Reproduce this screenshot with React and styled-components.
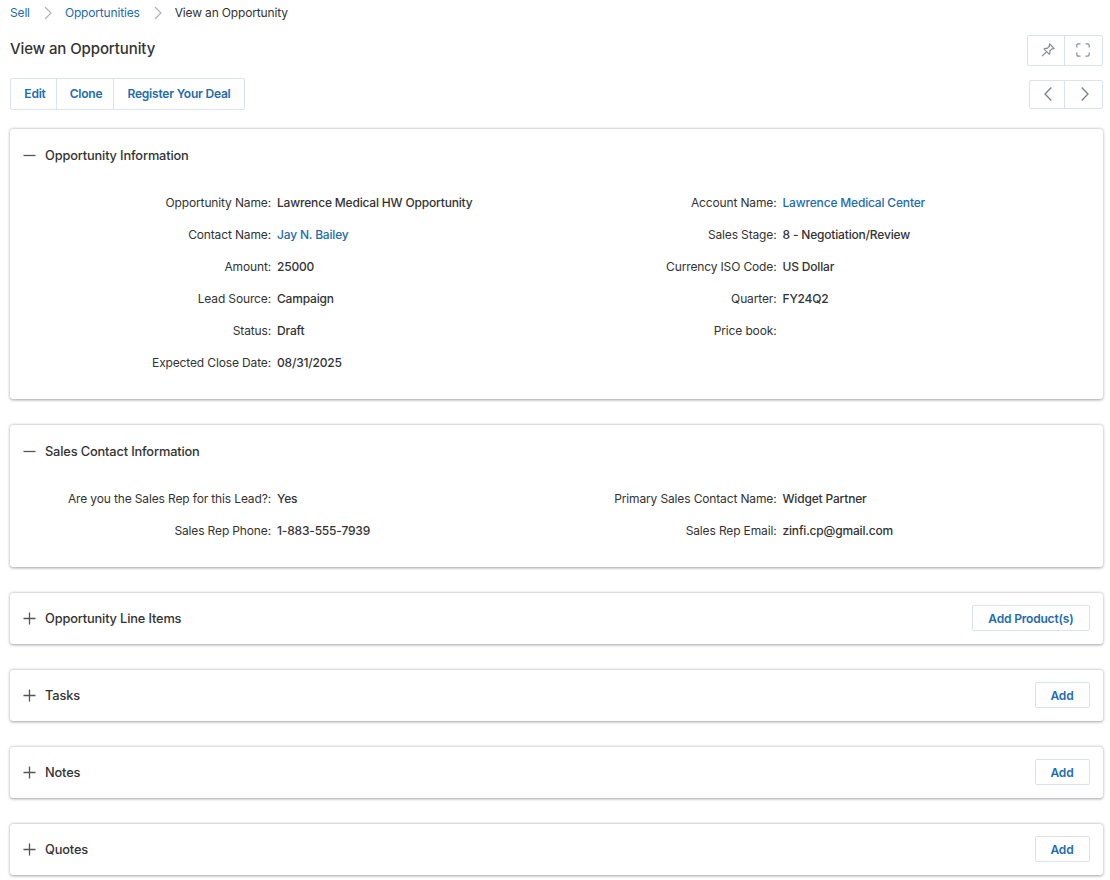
import React from "react";
import styled, { createGlobalStyle } from "styled-components";

const GlobalStyle = createGlobalStyle`
  * { box-sizing: border-box; }
  body {
    margin: 0;
    background: #fff;
    color: #333;
    font-family: Inter, "Liberation Sans", sans-serif;
    font-size: 12px;
  }
`;

const Page = styled.div`
  width: 1110px;
  height: 880px;
  padding: 0 7.5px 0 10px;
  overflow: hidden;
`;

const Breadcrumb = styled.nav`
  display: flex;
  align-items: center;
  height: 25px;
  font-size: 12px;
  letter-spacing: -0.16px;
  svg { margin: 1px 13px 0 14px; }
`;

const Link = styled.a`
  color: #1d6bb0;
  text-decoration: none;
`;

const TitleBar = styled.header`
  display: flex;
  justify-content: space-between;
  height: 53px;
  padding-top: 10px;
`;

const Title = styled.h1`
  margin: 0;
  font-size: 15px;
  font-weight: 500;
  letter-spacing: -0.1px;
  line-height: 27px;
`;

const Toolbar = styled.div`
  display: flex;
  align-items: center;
  justify-content: space-between;
  height: 32px;
`;

const Group = styled.div`
  display: flex;
  height: ${(p) => p.$height}px;
  border: 1px solid #dbe2eb;
  border-radius: 2px;
`;

const GroupButton = styled.button`
  display: flex;
  align-items: center;
  justify-content: center;
  width: ${(p) => p.$width}px;
  padding: 0 0 1px ${(p) => p.$inset || 0}px;
  border: 0;
  background: none;
  color: #1d6bb0;
  font: 600 12px Inter, sans-serif;
  letter-spacing: -0.2px;
  white-space: nowrap;
  & + & { border-left: 1px solid #dbe2eb; }
`;

const Sections = styled.main`
  display: flex;
  flex-direction: column;
  gap: 26px;
  padding-top: 19px;
`;

const Card = styled.section`
  height: ${(p) => p.$height}px;
  flex: none;
  border-radius: 3px;
  background: #fff;
  box-shadow: 0 0.5px 3px rgba(30, 30, 50, 0.42);
`;

const CardHeader = styled.div`
  display: flex;
  align-items: center;
  height: ${(p) => (p.$open ? 52 : 51)}px;
  padding: 0 13px;
`;

const CardTitle = styled.h2`
  flex: 1;
  margin: 0 0 0 9px;
  font-size: 12.8px;
  font-weight: 500;
  letter-spacing: -0.15px;
`;

const AddButton = styled.button`
  height: 26px;
  margin-bottom: 1px;
  padding: 0 15px;
  border: 1px solid #dbe2eb;
  border-radius: 2px;
  background: #fff;
  color: #1d6bb0;
  font: 600 12px Inter, sans-serif;
  letter-spacing: -0.18px;
`;

const Fields = styled.div`
  display: grid;
  grid-template-columns: 505.5px 505.5px;
  grid-auto-rows: 32px;
  padding-top: 5px;
`;

const Field = styled.div`
  display: grid;
  grid-template-columns: 261px 1fr;
  column-gap: 6px;
  align-items: center;
  white-space: nowrap;
`;

const Label = styled.span`
  text-align: right;
  letter-spacing: -0.14px;
`;

const Value = styled.span`
  font-weight: 500;
  letter-spacing: -0.18px;
`;

const Stroke = ({ w, h, d, color = "#868d96", width = 1.2 }) => (
  <svg width={w} height={h} viewBox={`0 0 ${w} ${h}`} fill="none" stroke={color} strokeWidth={width}>
    <path d={d} />
  </svg>
);

const Separator = () => <Stroke w={8} h={14} d="M1 1l6 6-6 6" color="#a9b0b8" width={1.1} />;

const Toggle = ({ open }) => (
  <Stroke w={13} h={13} d={open ? "M.5 6.5h12" : "M.5 6.5h12M6.5 .5v12"} color="#555" width={1.3} />
);

const infoFields = [
  ["Opportunity Name", "Lawrence Medical HW Opportunity"],
  ["Account Name", "Lawrence Medical Center", true],
  ["Contact Name", "Jay N. Bailey", true],
  ["Sales Stage", "8 - Negotiation/Review"],
  ["Amount", "25000"],
  ["Currency ISO Code", "US Dollar"],
  ["Lead Source", "Campaign"],
  ["Quarter", "FY24Q2"],
  ["Status", "Draft"],
  ["Price book", ""],
  ["Expected Close Date", "08/31/2025"],
];

const contactFields = [
  ["Are you the Sales Rep for this Lead?", "Yes"],
  ["Primary Sales Contact Name", "Widget Partner"],
  ["Sales Rep Phone", "1-883-555-7939"],
  ["Sales Rep Email", "zinfi.cp@gmail.com"],
];

const Section = ({ title, height, fields, action }) => (
  <Card $height={height}>
    <CardHeader $open={!!fields}>
      <Toggle open={!!fields} />
      <CardTitle>{title}</CardTitle>
      {action && <AddButton>{action}</AddButton>}
    </CardHeader>
    {fields && (
      <Fields>
        {fields.map(([label, value, link]) => (
          <Field key={label}>
            <Label>{label}:</Label>
            <Value>{link ? <Link>{value}</Link> : value}</Value>
          </Field>
        ))}
      </Fields>
    )}
  </Card>
);

export default function App() {
  return (
    <>
      <GlobalStyle />
      <Page>
        <Breadcrumb>
          <Link>Sell</Link>
          <Separator />
          <Link>Opportunities</Link>
          <Separator />
          <span>View an Opportunity</span>
        </Breadcrumb>
        <TitleBar>
          <Title>View an Opportunity</Title>
          <Group $height={31}>
            <GroupButton $width={36} $inset={5} aria-label="Pin">
              <Stroke w={14} h={14} width={1.2} d="M8.7 1l4.3 4.3-1 .6-1-.1-2.2 2.2.1 2.3-.8.8L3.1 6.1l.8-.8 2.3.1 2.2-2.2-.2-1zM5.6 8.6L1 13.2" />
            </GroupButton>
            <GroupButton $width={38} aria-label="Full screen">
              <Stroke w={14} h={14} width={1.2} d="M.8 4.5V2.5Q.8 .8 2.5 .8h2M9.5 .8h2Q13.2 .8 13.2 2.5v2M13.2 9.5v2q0 1.7-1.7 1.7h-2M4.5 13.2h-2Q.8 13.2 .8 11.5v-2" />
            </GroupButton>
          </Group>
        </TitleBar>
        <Toolbar>
          <Group $height={32}>
            <GroupButton $width={45} $inset={3}>Edit</GroupButton>
            <GroupButton $width={57} $inset={2}>Clone</GroupButton>
            <GroupButton $width={131}>Register Your Deal</GroupButton>
          </Group>
          <Group $height={29}>
            <GroupButton $width={34} $inset={3} aria-label="Previous">
              <Stroke w={8} h={14} d="M7.3.5L1 7l6.3 6.5" color="#777e87" width={1.3} />
            </GroupButton>
            <GroupButton $width={38} $inset={3} aria-label="Next">
              <Stroke w={8} h={14} d="M.7.5L7 7l-6.3 6.5" color="#777e87" width={1.3} />
            </GroupButton>
          </Group>
        </Toolbar>
        <Sections>
          <Section title="Opportunity Information" height={270} fields={infoFields} />
          <Section title="Sales Contact Information" height={142} fields={contactFields} />
          <Section title="Opportunity Line Items" height={51} action="Add Product(s)" />
          <Section title="Tasks" height={51} action="Add" />
          <Section title="Notes" height={51} action="Add" />
          <Section title="Quotes" height={51} action="Add" />
        </Sections>
      </Page>
    </>
  );
}
